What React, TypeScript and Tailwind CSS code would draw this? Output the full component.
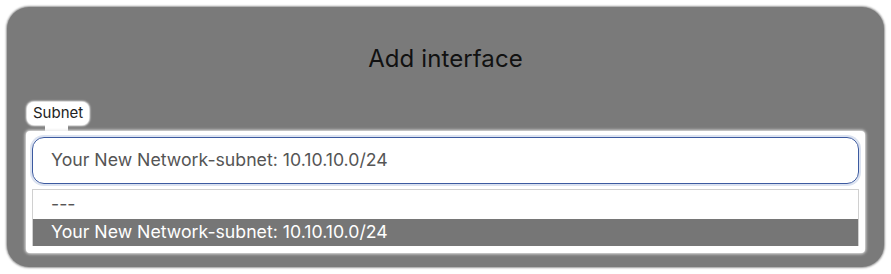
import React from "react";

export default function App() {
  return (
    <div className="w-[891px] h-[274px] bg-white p-[7px] font-['Inter',sans-serif]">
      <div className="w-[877px] h-[260px] rounded-[22px] bg-[#7a7a7a] shadow-[0_0_2px_1px_#9a9a9a] flex flex-col px-[19px]">
        <div className="h-[95px] flex items-center justify-center pt-[8px]">
          <h2 className="text-[24px] leading-none text-[#111] tracking-[0.1px]">Add interface</h2>
        </div>
        <div className="flex flex-col items-start">
          <div className="ml-[1px] h-[23px] px-[6px] rounded-[7px] bg-white shadow-[0_0_2px_1px_#ffffff] flex items-center text-[15px] text-[#222]">
            Subnet
          </div>
          <div className="ml-[19px] w-[23px] h-[6px] bg-white" />
        </div>
        <div className="bg-white rounded-[4px] shadow-[0_0_3px_1px_#e8e8e8] px-[6px] pt-[6px] pb-[7px]">
          <div className="h-[47px] rounded-[12px] border border-[#3c5aa0] shadow-[0_0_0_2px_#dbe2f0] flex items-center pl-[18px] text-[17.7px] text-[#555]">
            Your New Network-subnet: 10.10.10.0/24
          </div>
          <div className="mt-[5px] border border-[#d0d0d0] border-b-0">
            <div className="h-[29px] flex items-center pl-[18px] text-[17.7px] text-[#555]">---</div>
            <div className="h-[27px] flex items-center pl-[18px] text-[17.7px] text-white bg-[#767676]">
              Your New Network-subnet: 10.10.10.0/24
            </div>
          </div>
        </div>
      </div>
    </div>
  );
}
